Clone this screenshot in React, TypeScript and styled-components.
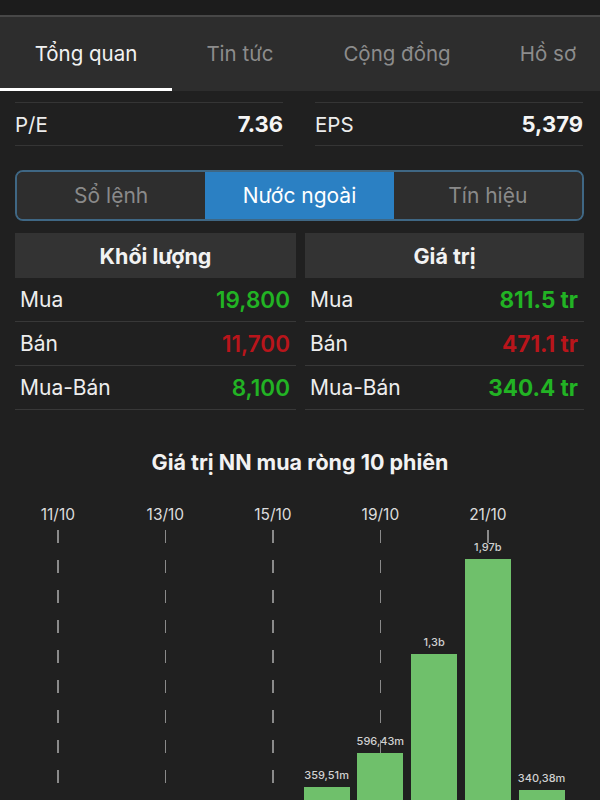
import styled, { createGlobalStyle } from "styled-components";

const GlobalStyle = createGlobalStyle`
  html, body {
    margin: 0;
    padding: 0;
    background: #202020;
    height: 800px;
    overflow: hidden;
  }
  body {
    font-family: Inter, "Liberation Sans", sans-serif;
    color: #f0f0f0;
  }
  * { box-sizing: border-box; }
`;

const TopStrip = styled.div`
  height: 17px;
  background: #1c1c1c;
  border-bottom: 2px solid #474747;
`;

const TabBar = styled.div`
  display: flex;
  height: 74px;
  background: #2d2d2d;
  overflow: hidden;
`;

const Tab = styled.div<{ $w: number; $active?: boolean }>`
  flex: 0 0 ${(p) => p.$w}px;
  display: flex;
  align-items: center;
  justify-content: center;
  padding-top: 2px;
  font-size: 20.5px;
  color: ${(p) => (p.$active ? "#f2f2f2" : "#8c8c8c")};
  border-bottom: 3px solid ${(p) => (p.$active ? "#ffffff" : "transparent")};
`;

const StatGrid = styled.div`
  display: grid;
  grid-template-columns: 268px 268px;
  column-gap: 32px;
  padding: 11px 0 0 15px;
`;

const StatCell = styled.div`
  display: flex;
  justify-content: space-between;
  align-items: center;
  height: 44px;
  border-top: 1px solid #353535;
  border-bottom: 1px solid #353535;
  font-size: 20.5px;
`;

const StatLabel = styled.span`
  color: #ececec;
`;

const StatValue = styled.span`
  font-size: 22px;
  font-weight: 700;
  color: #f5f5f5;
`;

const Segmented = styled.div`
  display: grid;
  grid-template-columns: repeat(3, 1fr);
  margin: 24px 16px 0 15px;
  height: 51px;
  border: 2px solid #3f6784;
  border-radius: 8px;
  overflow: hidden;
  background: #2e2e2e;
`;

const Segment = styled.div<{ $active?: boolean }>`
  display: flex;
  align-items: center;
  justify-content: center;
  font-size: 21px;
  color: ${(p) => (p.$active ? "#ffffff" : "#8a8a8a")};
  background: ${(p) => (p.$active ? "#2b80c3" : "#2e2e2e")};
`;

const Tables = styled.div`
  display: grid;
  grid-template-columns: 281px 279px;
  column-gap: 9px;
  margin: 12px 0 0 15px;
`;

const TableHeader = styled.div`
  height: 45px;
  display: flex;
  align-items: center;
  justify-content: center;
  background: #333333;
  font-size: 21.5px;
  font-weight: 700;
  color: #f2f2f2;
`;

const TableRow = styled.div`
  display: flex;
  justify-content: space-between;
  align-items: center;
  height: 44px;
  padding: 0 6px 0 5px;
  border-bottom: 1px solid #383838;
  font-size: 21px;
`;

const RowLabel = styled.span`
  color: #ededed;
`;

const RowValue = styled.span<{ $tone: "up" | "down"; $bold?: boolean }>`
  font-size: 22.5px;
  font-weight: ${(p) => (p.$bold ? 700 : 600)};
  color: ${(p) => (p.$tone === "up" ? "#22b324" : "#b9151b")};
`;

const ChartTitle = styled.div`
  margin-top: 40px;
  text-align: center;
  font-size: 21.5px;
  line-height: 24px;
  font-weight: 700;
  color: #f2f2f2;
`;

const Chart = styled.div`
  display: grid;
  grid-template-columns: repeat(10, 53.75px);
  margin: 32px 0 0 31px;
`;

const Column = styled.div`
  display: flex;
  flex-direction: column;
  align-items: center;
`;

const DateLabel = styled.div`
  height: 18px;
  line-height: 18px;
  font-size: 15.5px;
  color: #dcdcdc;
  white-space: nowrap;
`;

const Plot = styled.div`
  position: relative;
  width: 100%;
  height: 314px;
  display: flex;
  flex-direction: column;
  justify-content: flex-end;
  align-items: center;
`;

const GridLine = styled.div`
  position: absolute;
  left: calc(50% - 0.75px);
  top: 6px;
  bottom: 0;
  width: 1.5px;
  background: repeating-linear-gradient(
    to bottom,
    #8a8a8a 0 13px,
    transparent 13px 30px
  );
`;

const BarLabel = styled.div`
  position: relative;
  font-size: 11px;
  line-height: 14px;
  font-weight: 500;
  color: #d0d0d0;
  margin-bottom: 5px;
  white-space: nowrap;
`;

const Bar = styled.div`
  position: relative;
  width: 46px;
  background: #6fc06b;
`;

const PX_PER_B = 141.8;

const sessions: { date?: string; value?: number; label?: string }[] = [
  { date: "11/10" },
  {},
  { date: "13/10" },
  {},
  { date: "15/10" },
  { value: 0.35951, label: "359,51m" },
  { date: "19/10", value: 0.59643, label: "596,43m" },
  { value: 1.3, label: "1,3b" },
  { date: "21/10", value: 1.97, label: "1,97b" },
  { value: 0.34038, label: "340,38m" },
];

const tabs = [
  { name: "Tổng quan", w: 172, active: true },
  { name: "Tin tức", w: 136 },
  { name: "Cộng đồng", w: 178 },
  { name: "Hồ sơ", w: 124 },
];

export default function App() {
  return (
    <>
      <GlobalStyle />
      <TopStrip />
      <TabBar>
        {tabs.map((t) => (
          <Tab key={t.name} $w={t.w} $active={t.active}>
            {t.name}
          </Tab>
        ))}
      </TabBar>

      <StatGrid>
        <StatCell>
          <StatLabel>P/E</StatLabel>
          <StatValue>7.36</StatValue>
        </StatCell>
        <StatCell>
          <StatLabel>EPS</StatLabel>
          <StatValue>5,379</StatValue>
        </StatCell>
      </StatGrid>

      <Segmented>
        <Segment>Sổ lệnh</Segment>
        <Segment $active>Nước ngoài</Segment>
        <Segment>Tín hiệu</Segment>
      </Segmented>

      <Tables>
        <div>
          <TableHeader>Khối lượng</TableHeader>
          <TableRow>
            <RowLabel>Mua</RowLabel>
            <RowValue $tone="up">19,800</RowValue>
          </TableRow>
          <TableRow>
            <RowLabel>Bán</RowLabel>
            <RowValue $tone="down">11,700</RowValue>
          </TableRow>
          <TableRow>
            <RowLabel>Mua-Bán</RowLabel>
            <RowValue $tone="up">8,100</RowValue>
          </TableRow>
        </div>
        <div>
          <TableHeader>Giá trị</TableHeader>
          <TableRow>
            <RowLabel>Mua</RowLabel>
            <RowValue $tone="up" $bold>811.5 tr</RowValue>
          </TableRow>
          <TableRow>
            <RowLabel>Bán</RowLabel>
            <RowValue $tone="down" $bold>471.1 tr</RowValue>
          </TableRow>
          <TableRow>
            <RowLabel>Mua-Bán</RowLabel>
            <RowValue $tone="up" $bold>340.4 tr</RowValue>
          </TableRow>
        </div>
      </Tables>

      <ChartTitle>Giá trị NN mua ròng 10 phiên</ChartTitle>

      <Chart>
        {sessions.map((s, i) => (
          <Column key={i}>
            <DateLabel>{s.date}</DateLabel>
            <Plot>
              {s.date && <GridLine />}
              {s.value !== undefined && (
                <>
                  <BarLabel>{s.label}</BarLabel>
                  <Bar style={{ height: s.value * PX_PER_B }} />
                </>
              )}
            </Plot>
          </Column>
        ))}
      </Chart>
    </>
  );
}
